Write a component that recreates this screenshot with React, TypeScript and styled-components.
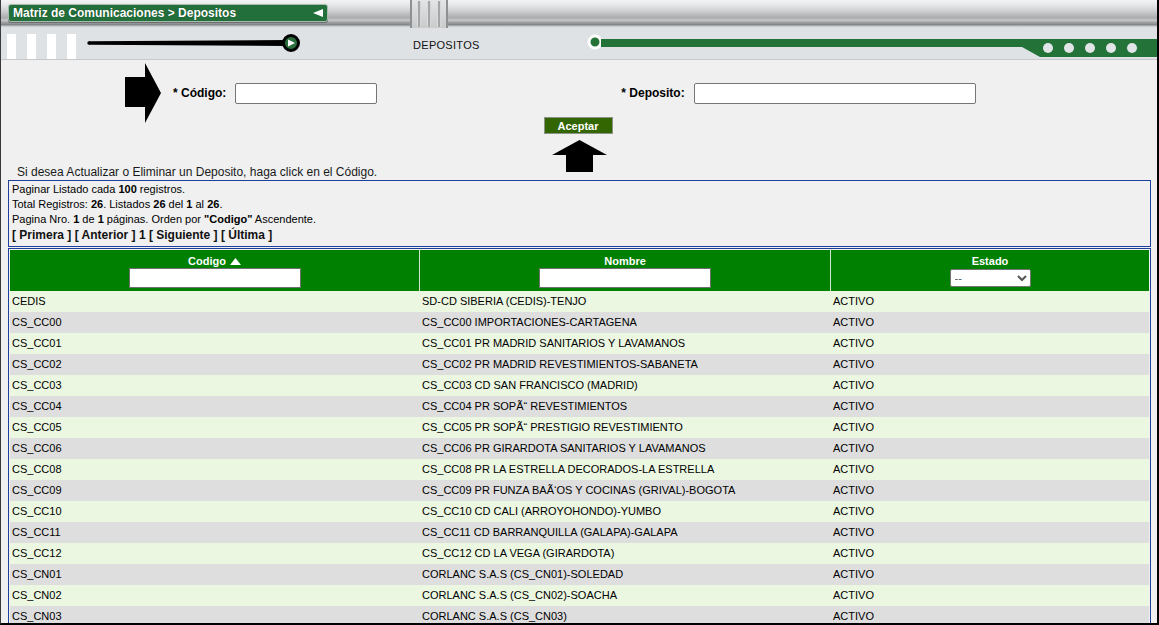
import React from "react";
import styled, { createGlobalStyle } from "styled-components";

const GlobalStyle = createGlobalStyle`
  * { box-sizing: border-box; }
  html, body { margin: 0; padding: 0; background: #f0f0f0; }
  body { font-family: "Liberation Sans", Arial, sans-serif; color: #000; overflow: hidden; }
`;

const Page = styled.div`
  width: 1159px;
  height: 625px;
  overflow: hidden;
  background: #f0f0f0;
  border-left: 1px solid #3a3a3a;
  border-right: 2px solid #000;
  border-bottom: 2px solid #000;
  display: flex;
  flex-direction: column;
`;

const silver = `linear-gradient(
  #f4f4f4 0%, #e6e7e8 18%, #d3d4d6 36%, #b6b8ba 55%, #a9abad 64%,
  #c6c8ca 72%, #a0a2a4 80%, #838587 88%, #cfd2d4 95%, #e3e6e8 100%)`;

const TopBar = styled.div`
  height: 28px;
  display: flex;
  align-items: center;
  background: ${silver};
`;

const TitleTab = styled.div`
  margin-left: 7px;
  width: 320px;
  height: 18px;
  margin-top: -3px;
  background: #236f3b;
  border: 1px solid #a8bcae;
  border-radius: 3px;
  box-shadow: 0 1px 0 #6d7072;
  display: flex;
  align-items: center;
  justify-content: space-between;
  padding: 0 4px 0 4px;
  color: #fff;
  font-size: 12px;
  font-weight: bold;
  text-shadow: 0 0 1px #0b3a18;
`;

const TubeGap = styled.div`
  width: 82px;
`;

const Grip = styled.div`
  width: 38px;
  height: 28px;
  display: flex;
  gap: 6px;
  justify-content: center;
  background: linear-gradient(#e4e5e6, #d5d7d9 50%, #c9cbcd);
  border-left: 2px solid #8e9092;
  border-right: 2px solid #8e9092;
`;

const Groove = styled.span`
  width: 4px;
  height: 26px;
  margin-top: 1px;
  background: linear-gradient(90deg, #f6f6f6, #8a8c8e 50%, #f0f0f0);
`;

const SubBar = styled.div`
  height: 33px;
  display: flex;
  background: #dfe2e5;
  border-bottom: 1px solid #c6c8ca;
`;

const Posts = styled.div`
  display: flex;
  gap: 11px;
  margin-left: 6px;
  align-self: flex-end;
`;

const Post = styled.span`
  width: 9px;
  height: 25px;
  background: #fff;
`;

const SliderArt = styled.svg`
  margin-left: 11px;
  margin-top: 5px;
  flex: none;
`;

const ScreenTitle = styled.div`
  width: 284px;
  padding-left: 110px;
  padding-top: 11px;
  font-size: 11px;
  letter-spacing: 0.3px;
  color: #111;
`;

const Track = styled.div`
  flex: 1;
  display: flex;
  align-items: flex-start;
  padding-top: 6px;
`;

const TrackLine = styled.div`
  flex: 1;
  height: 8px;
  margin-top: 5px;
  margin-left: -2px;
  background: #237238;
`;

const TrackEnd = styled.svg`
  margin-top: 5px;
  flex: none;
`;

const Main = styled.main`
  padding: 0 6px 0 7px;
  display: flex;
  flex-direction: column;
`;

const FieldsRow = styled.div`
  display: flex;
  align-items: center;
  height: 60px;
  margin-top: 3px;
  padding-left: 117px;
`;

const FieldGroup = styled.div<{ $offset?: number }>`
  display: flex;
  align-items: center;
  gap: 9px;
  margin-left: ${(p) => p.$offset ?? 0}px;
`;

const Pointer = styled.svg`
  margin-right: 3px;
  flex: none;
`;

const FieldLabel = styled.label`
  font-size: 12px;
  font-weight: bold;
`;

const TextField = styled.input<{ $w: number }>`
  width: ${(p) => p.$w}px;
  height: 21px;
  border: 1px solid #767676;
  border-radius: 2px;
  background: #fff;
  padding: 1px 3px;
  font: 12px "Liberation Sans", Arial, sans-serif;
`;

const ActionRow = styled.div`
  display: flex;
  justify-content: center;
  margin-top: -6px;
  padding-right: 3px;
`;

const AcceptButton = styled.button`
  width: 69px;
  height: 17px;
  padding: 0;
  background: #336600;
  border: 1px solid #8a9386;
  color: #fff;
  font: bold 11px "Liberation Sans", Arial, sans-serif;
  cursor: pointer;
`;

const HintRow = styled.div`
  display: grid;
  grid-template-columns: 1fr auto 1fr;
  align-items: end;
  margin-top: 6px;
`;

const Hint = styled.p`
  margin: 0 0 -7px 0;
  padding-left: 9px;
  font-size: 12px;
  line-height: 14px;
  color: #1a1a1a;
`;

const InfoBox = styled.section`
  margin-top: 8px;
  border: 1px solid #1f3f9c;
  padding: 1px 3px 2px;
  font-size: 11px;
  line-height: 15px;
`;

const InfoLine = styled.div``;

const Pager = styled.div`
  font-size: 12px;
  font-weight: bold;
  line-height: 17px;
  color: #111;
`;

const TableBox = styled.section`
  margin-top: 1px;
  border: 1px solid #1f3f9c;
  padding: 1px;
`;

const HeadRow = styled.div`
  display: grid;
  grid-template-columns: 409px 410px 1fr;
  column-gap: 1px;
  background: #d6e4d6;
`;

const HeadCell = styled.div`
  height: 41px;
  background: #008000;
  display: flex;
  flex-direction: column;
  align-items: center;
  padding-top: 5px;
  color: #fff;
  font-size: 11px;
  font-weight: bold;
`;

const HeadTitle = styled.div`
  height: 13px;
  line-height: 13px;
  display: flex;
  align-items: center;
  gap: 4px;
`;

const FilterInput = styled.input`
  width: 172px;
  height: 20px;
  border: 1px solid #6f6f6f;
  border-radius: 1px;
  background: #fff;
  padding: 1px 3px;
  font: 11px "Liberation Sans", Arial, sans-serif;
`;

const FilterSelect = styled.select`
  width: 81px;
  height: 18px;
  margin-top: 1px;
  border: 1px solid #767676;
  border-radius: 2px;
  background: #fff;
  color: #555;
  font: 11px "Liberation Sans", Arial, sans-serif;
`;

const DataRow = styled.div<{ $alt: boolean }>`
  display: grid;
  grid-template-columns: 410px 411px 1fr;
  height: 21px;
  background: ${(p) => (p.$alt ? "#dedede" : "#ebf7e1")};
`;

const DataCell = styled.div`
  padding-left: 2px;
  font-size: 11px;
  line-height: 21px;
  white-space: nowrap;
  overflow: hidden;
`;

const rows: [string, string][] = [
  ["CEDIS", "SD-CD SIBERIA (CEDIS)-TENJO"],
  ["CS_CC00", "CS_CC00 IMPORTACIONES-CARTAGENA"],
  ["CS_CC01", "CS_CC01 PR MADRID SANITARIOS Y LAVAMANOS"],
  ["CS_CC02", "CS_CC02 PR MADRID REVESTIMIENTOS-SABANETA"],
  ["CS_CC03", "CS_CC03 CD SAN FRANCISCO (MADRID)"],
  ["CS_CC04", "CS_CC04 PR SOPÃ“ REVESTIMIENTOS"],
  ["CS_CC05", "CS_CC05 PR SOPÃ“ PRESTIGIO REVESTIMIENTO"],
  ["CS_CC06", "CS_CC06 PR GIRARDOTA SANITARIOS Y LAVAMANOS"],
  ["CS_CC08", "CS_CC08 PR LA ESTRELLA DECORADOS-LA ESTRELLA"],
  ["CS_CC09", "CS_CC09 PR FUNZA BAÃ‘OS Y COCINAS (GRIVAL)-BOGOTA"],
  ["CS_CC10", "CS_CC10 CD CALI (ARROYOHONDO)-YUMBO"],
  ["CS_CC11", "CS_CC11 CD BARRANQUILLA (GALAPA)-GALAPA"],
  ["CS_CC12", "CS_CC12 CD LA VEGA (GIRARDOTA)"],
  ["CS_CN01", "CORLANC S.A.S (CS_CN01)-SOLEDAD"],
  ["CS_CN02", "CORLANC S.A.S (CS_CN02)-SOACHA"],
  ["CS_CN03", "CORLANC S.A.S (CS_CN03)"],
];

export default function App() {
  return (
    <>
      <GlobalStyle />
      <Page>
        <TopBar>
          <TitleTab>
            <span>Matriz de Comunicaciones &gt; Depositos</span>
            <svg width="10" height="8" viewBox="0 0 10 8">
              <polygon points="0,4 10,0 10,8" fill="#fff" />
            </svg>
          </TitleTab>
          <TubeGap />
          <Grip>
            <Groove />
            <Groove />
            <Groove />
          </Grip>
        </TopBar>
        <SubBar>
          <Posts>
            <Post />
            <Post />
            <Post />
            <Post />
          </Posts>
          <SliderArt width="216" height="20" viewBox="0 0 216 20">
            <polygon points="2,8.3 200,7 200,13 2,11.7" fill="#000" />
            <circle cx="2" cy="10" r="1.7" fill="#000" />
            <circle cx="204" cy="10" r="7.5" fill="#2a6e3c" stroke="#000" strokeWidth="3" />
            <polygon points="201,6.5 201,13.5 208,10" fill="#fff" />
          </SliderArt>
          <ScreenTitle>DEPOSITOS</ScreenTitle>
          <Track>
            <svg width="16" height="16" viewBox="0 0 16 16" style={{ flex: "none" }}>
              <circle cx="8" cy="8" r="6" fill="#237238" stroke="#fff" strokeWidth="3" />
            </svg>
            <TrackLine />
            <TrackEnd width="135" height="20" viewBox="0 0 135 20">
              <polygon points="0,0 135,0 135,18 18,18 0,8" fill="#237238" />
              {[26, 47, 68, 89, 110].map((x) => (
                <circle key={x} cx={x} cy="9" r="5" fill="#e2e5e8" />
              ))}
            </TrackEnd>
          </Track>
        </SubBar>
        <Main>
          <FieldsRow>
            <FieldGroup>
              <Pointer width="36" height="60" viewBox="0 0 36 60">
                <polygon points="0,14 20,14 20,0 36,30 20,60 20,44 0,44" fill="#000" />
              </Pointer>
              <FieldLabel>* Código:</FieldLabel>
              <TextField $w={142} type="text" />
            </FieldGroup>
            <FieldGroup $offset={244}>
              <FieldLabel>* Deposito:</FieldLabel>
              <TextField $w={282} type="text" />
            </FieldGroup>
          </FieldsRow>
          <ActionRow>
            <AcceptButton>Aceptar</AcceptButton>
          </ActionRow>
          <HintRow>
            <Hint>Si desea Actualizar o Eliminar un Deposito, haga click en el Código.</Hint>
            <svg width="55" height="32" viewBox="0 0 55 32">
              <polygon points="27.5,0 55,15 41,15 41,32 14,32 14,15 0,15" fill="#000" />
            </svg>
            <span />
          </HintRow>
          <InfoBox>
            <InfoLine>
              Paginar Listado cada <b>100</b> registros.
            </InfoLine>
            <InfoLine>
              Total Registros: <b>26</b>. Listados <b>26</b> del <b>1</b> al <b>26</b>.
            </InfoLine>
            <InfoLine>
              Pagina Nro. <b>1</b> de <b>1</b> páginas. Orden por <b>"Codigo"</b> Ascendente.
            </InfoLine>
            <Pager>[ Primera ] [ Anterior ] 1 [ Siguiente ] [ Última ]</Pager>
          </InfoBox>
          <TableBox>
            <HeadRow>
              <HeadCell>
                <HeadTitle>
                  Codigo
                  <svg width="11" height="7" viewBox="0 0 11 7">
                    <polygon points="5.5,0 11,7 0,7" fill="#fff" />
                  </svg>
                </HeadTitle>
                <FilterInput type="text" />
              </HeadCell>
              <HeadCell>
                <HeadTitle>Nombre</HeadTitle>
                <FilterInput type="text" />
              </HeadCell>
              <HeadCell>
                <HeadTitle>Estado</HeadTitle>
                <FilterSelect defaultValue="--">
                  <option value="--">--</option>
                  <option value="A">ACTIVO</option>
                  <option value="I">INACTIVO</option>
                </FilterSelect>
              </HeadCell>
            </HeadRow>
            {rows.map(([code, name], i) => (
              <DataRow key={code} $alt={i % 2 === 1}>
                <DataCell>{code}</DataCell>
                <DataCell>{name}</DataCell>
                <DataCell>ACTIVO</DataCell>
              </DataRow>
            ))}
          </TableBox>
        </Main>
      </Page>
    </>
  );
}
